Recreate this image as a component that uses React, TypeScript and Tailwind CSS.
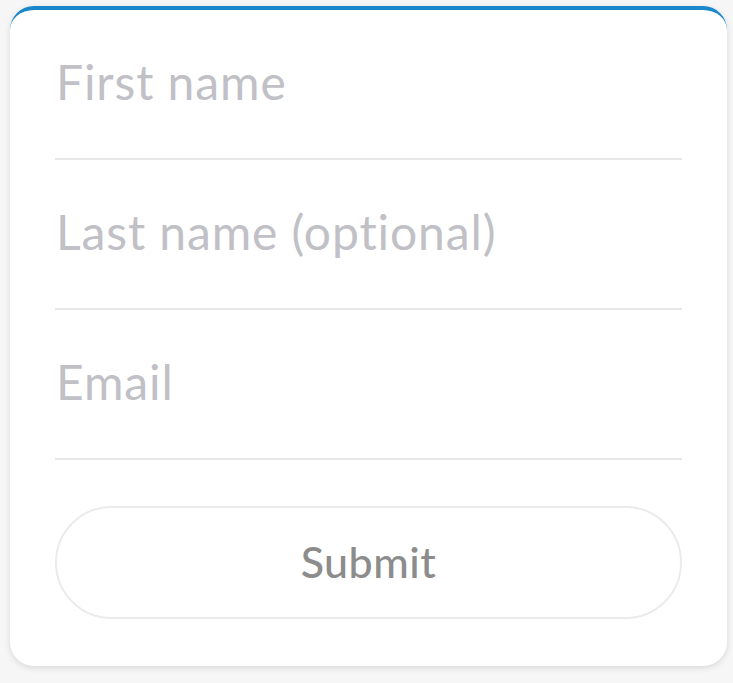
import { useState } from "react";

const fields = [
  { key: "first", placeholder: "First name", type: "text" },
  { key: "last", placeholder: "Last name (optional)", type: "text" },
  { key: "email", placeholder: "Email", type: "email" },
];

export default function App() {
  const [values, setValues] = useState<Record<string, string>>({});

  return (
    <div className="min-h-[683px] w-[733px] bg-[#f6f6f6] pt-[6px] pl-[10px] font-['Lato',sans-serif]">
      <div className="w-[717px] h-[660px] rounded-[24px] border-t-4 border-[#1a87cb] bg-white px-[45px] shadow-[0_2px_6px_rgba(0,0,0,0.12)]">
        {fields.map((f) => (
          <div key={f.key} className="h-[150px] border-b-2 border-[#e8e8ea] flex items-end">
            <input
              type={f.type}
              value={values[f.key] ?? ""}
              onChange={(e) => setValues({ ...values, [f.key]: e.target.value })}
              placeholder={f.placeholder}
              className="w-full h-[60px] mb-[46px] bg-transparent outline-none text-[48px] tracking-[0.9px] text-[#333] placeholder:text-[#c0c0c6] pl-[1px]"
            />
          </div>
        ))}
        <button className="mt-[46px] w-full h-[113px] rounded-full border-2 border-[#ebebeb] text-[43px] font-medium tracking-[0.5px] text-[#8c8c8c]">
          Submit
        </button>
      </div>
    </div>
  );
}
